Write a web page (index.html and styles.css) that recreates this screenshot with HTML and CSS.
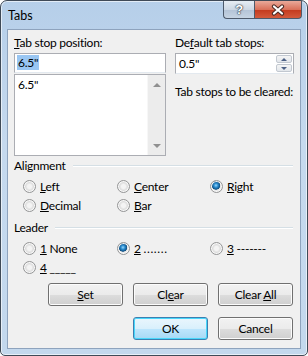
FILE: index.html
```html
<!DOCTYPE html>
<html lang="en">
<head>
    <meta charset="UTF-8">
    <title>Tabs</title>
    <link rel="stylesheet" href="styles.css">
</head>
<body>
    <div class="window">
        <div class="titlebar">
            <span class="title">Tabs</span>
            <div class="caption-buttons">
                <span class="cap-btn help">?</span>
                <span class="cap-btn close">
                    <svg width="16" height="12" viewBox="0 0 16 12">
                        <path d="M4 2.5 L12 9.5 M12 2.5 L4 9.5" stroke="#4a2a24" stroke-width="4.2" stroke-linecap="round"/>
                        <path d="M4 2.5 L12 9.5 M12 2.5 L4 9.5" stroke="#fff" stroke-width="2.2" stroke-linecap="round"/>
                    </svg>
                </span>
            </div>
        </div>

        <div class="client">
            <div class="top">
                <div class="col-left">
                    <div class="lbl"><u>T</u>ab stop position:</div>
                    <div class="textbox"><span class="sel">6.5"</span></div>
                    <div class="listbox">
                        <div class="list-items">
                            <div>6.5"</div>
                        </div>
                        <div class="vscroll">
                            <span class="arr up"></span>
                            <span class="arr down"></span>
                        </div>
                    </div>
                </div>
                <div class="col-right">
                    <div class="lbl">De<u>f</u>ault tab stops:</div>
                    <div class="spin">
                        <span class="spin-value">0.5"</span>
                        <div class="spin-btns">
                            <span class="spin-btn"><span class="arr up"></span></span>
                            <span class="spin-btn"><span class="arr down"></span></span>
                        </div>
                    </div>
                    <div class="lbl cleared">Tab stops to be cleared:</div>
                </div>
            </div>

            <div class="group first">
                <div class="group-head"><span>Alignment</span></div>
                <div class="radios">
                    <div class="radio"><span class="circle"></span><span><u>L</u>eft</span></div>
                    <div class="radio"><span class="circle"></span><span><u>C</u>enter</span></div>
                    <div class="radio"><span class="circle checked"></span><span><u>R</u>ight</span></div>
                    <div class="radio"><span class="circle"></span><span><u>D</u>ecimal</span></div>
                    <div class="radio"><span class="circle"></span><span><u>B</u>ar</span></div>
                </div>
            </div>

            <div class="group">
                <div class="group-head"><span>Leader</span></div>
                <div class="radios">
                    <div class="radio"><span class="circle"></span><span><u>1</u> None</span></div>
                    <div class="radio"><span class="circle checked"></span><span><u>2</u> <span class="fill">.......</span></span></div>
                    <div class="radio"><span class="circle"></span><span><u>3</u> -------</span></div>
                    <div class="radio"><span class="circle"></span><span><u>4</u> _____</span></div>
                </div>
            </div>

            <div class="button-row">
                <button class="btn"><u>S</u>et</button>
                <button class="btn">Cl<u>e</u>ar</button>
                <button class="btn">Clear <u>A</u>ll</button>
            </div>
            <div class="button-row last">
                <button class="btn default">OK</button>
                <button class="btn">Cancel</button>
            </div>
        </div>
    </div>
</body>
</html>
```

FILE: styles.css
```css
body {
    margin: 0;
    font-family: Lato, "Liberation Sans", sans-serif;
    font-size: 12px;
    letter-spacing: -0.25px;
    color: #000;
    background: #fff;
}

.window {
    width: 308px;
    height: 356px;
    box-sizing: border-box;
    border: 1px solid #3f4a57;
    border-radius: 7px 7px 5px 5px;
    background: linear-gradient(#b6cfe9, #c5d9ee 40%, #c3d8ed);
    box-shadow: inset 0 0 0 1px rgba(255, 255, 255, 0.6);
    display: flex;
    flex-direction: column;
}

.titlebar {
    height: 28px;
    display: flex;
    justify-content: space-between;
    align-items: flex-start;
}

.title {
    padding: 7px 0 0 7px;
    font-size: 12.5px;
    letter-spacing: 0;
}

.caption-buttons {
    display: flex;
    margin-right: 5px;
}

.cap-btn {
    height: 18px;
    box-sizing: border-box;
    border: 1px solid #4d5a6b;
    border-top: none;
    display: flex;
    align-items: center;
    justify-content: center;
}

.help {
    width: 31px;
    border-radius: 0 0 0 4px;
    border-right: none;
    background: linear-gradient(#e6edf4, #cdd8e4 50%, #b3c3d6 51%, #c6d4e3);
    color: #fff;
    font-family: "Liberation Sans", sans-serif;
    font-weight: bold;
    font-size: 13px;
    text-shadow: 0 0 1px #2f3a48, 0 0 1px #2f3a48, 0 0 2px #2f3a48;
}

.close {
    width: 48px;
    border-radius: 0 0 4px 0;
    background: linear-gradient(#e9a99a, #d9715a 50%, #c3391d 51%, #d35a3c);
}

.client {
    flex: 1;
    margin: 0 6px 6px 6px;
    border: 1px solid #8ea3bd;
    background: #f0f0f0;
    padding: 5px 6px 0 6px;
}

.lbl {
    line-height: 15px;
    white-space: nowrap;
}

.top {
    display: flex;
    gap: 9px;
}

.col-left {
    width: 152px;
}

.col-right {
    flex: 1;
}

.col-left .lbl,
.col-right .lbl {
    margin-bottom: 3px;
}

.textbox {
    height: 20px;
    box-sizing: border-box;
    border: 1px solid #abadb3;
    border-bottom-color: #e3e9ef;
    background: #fff;
    padding: 2px 2px;
    line-height: 14px;
}

.sel {
    background: #99c6f2;
    padding: 0 1px;
}

.listbox {
    margin-top: 1px;
    height: 82px;
    box-sizing: border-box;
    border: 1px solid #abadb3;
    background: #fff;
    display: flex;
}

.list-items {
    flex: 1;
    padding: 3px 3px;
    line-height: 14px;
}

.vscroll {
    width: 17px;
    background: #ececec;
    border-left: 1px solid #f7f7f7;
    display: flex;
    flex-direction: column;
    justify-content: space-between;
    align-items: center;
    padding: 8px 0 7px;
}

.arr {
    width: 0;
    height: 0;
    border-left: 4px solid transparent;
    border-right: 4px solid transparent;
}

.arr.up {
    border-bottom: 4px solid #909090;
}

.arr.down {
    border-top: 4px solid #909090;
}

.spin {
    height: 21px;
    box-sizing: border-box;
    border: 1px solid #abadb3;
    border-bottom-color: #e3e9ef;
    background: #fff;
    display: flex;
    align-items: center;
    padding-left: 3px;
}

.spin-value {
    flex: 1;
}

.spin-btns {
    width: 16px;
    height: 17px;
    margin-right: 1px;
    display: flex;
    flex-direction: column;
    gap: 1px;
}

.spin-btn {
    flex: 1;
    border: 1px solid #c2c8d0;
    border-radius: 2px;
    background: linear-gradient(#f5f5f5, #e2e6eb);
    display: flex;
    align-items: center;
    justify-content: center;
}

.spin-btn .arr {
    border-left-width: 3px;
    border-right-width: 3px;
}

.spin-btn .arr.up {
    border-bottom: 3px solid #4d6185;
}

.spin-btn .arr.down {
    border-top: 3px solid #4d6185;
}

.col-right .cleared {
    margin-top: 10px;
}

.group {
    margin-bottom: 6px;
}

.group.first {
    margin-top: 2px;
    margin-bottom: 5px;
}

.group-head {
    display: flex;
    align-items: center;
    gap: 7px;
    line-height: 15px;
}

.group-head::after {
    content: "";
    flex: 1;
    border-top: 1px solid #d5dfe5;
    border-bottom: 1px solid #fff;
    margin-right: 1px;
}

.radios {
    margin-top: 4px;
    display: grid;
    grid-template-columns: 94px 93px 1fr;
    grid-auto-rows: 19px;
    padding-left: 9px;
}

.radio {
    display: flex;
    align-items: center;
    gap: 4px;
    white-space: nowrap;
}

.fill {
    letter-spacing: 0.6px;
}

.circle {
    width: 13px;
    height: 13px;
    box-sizing: border-box;
    border-radius: 50%;
    border: 1px solid #949596;
    background: radial-gradient(circle at 50% 50%, #f4f4f4 0, #f4f4f4 2px, #dcdcdc 4px, #e9e9e9 5px);
    box-shadow: inset 0 0 0 1px #f8f8f8;
    flex-shrink: 0;
}

.circle.checked {
    background: radial-gradient(circle at 45% 40%, #9ad8fb 0, #2a8ccf 2px, #0f4f82 4px, #dcdcdc 4.5px, #e9e9e9 5px);
}

.button-row {
    display: flex;
    justify-content: flex-end;
    gap: 10px;
    margin-right: 1px;
}

.button-row.last {
    margin-top: 11px;
}

.btn {
    width: 75px;
    height: 23px;
    font: inherit;
    letter-spacing: inherit;
    color: #000;
    border: 1px solid #707070;
    border-radius: 3px;
    background: linear-gradient(#f2f2f2, #ebebeb 50%, #dddddd 51%, #cfcfcf);
    box-shadow: inset 0 0 0 1px #fcfcfc;
    padding: 0;
}

.btn.default {
    border-color: #3c7fb1;
    background: linear-gradient(#eaf6fd, #d9f0fc 50%, #bee6fd 51%, #a7d9f5);
    box-shadow: inset 0 0 0 1px #48d7fb;
}
```
